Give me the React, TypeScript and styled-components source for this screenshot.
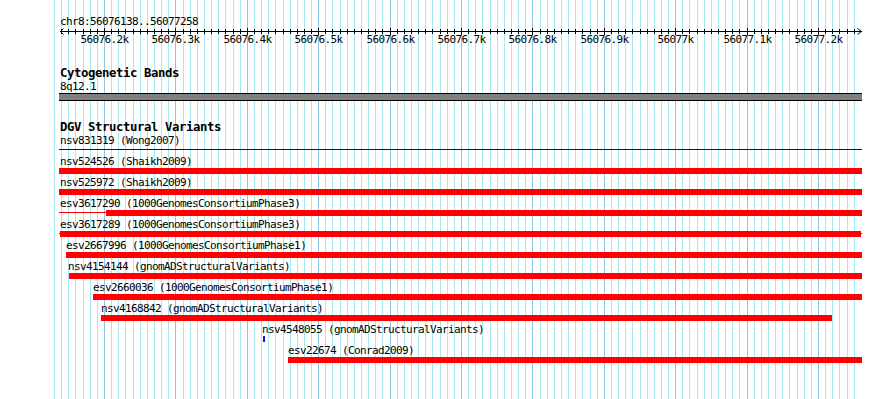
import React from 'react';
import styled, { createGlobalStyle } from 'styled-components';

const GlobalStyle = createGlobalStyle`
  html, body {
    margin: 0;
    padding: 0;
    background: #fff;
  }
`;

// 0.714 px per bp, 56076.2k sits on pixel column 104
const toX = (bp: number) => Math.round(104 + (bp - 56076200) * 0.714);

const GRID_FIRST = 56076130;
const GRID_LAST = 56077250;
const RULER_LEFT = 60;
const RULER_RIGHT = 861;

const gridStops: number[] = [];
for (let bp = GRID_FIRST; bp <= GRID_LAST; bp += 10) gridStops.push(bp);

const isMajor = (bp: number) => bp % 100 === 0;

const tickLabel = (bp: number) => {
  const k = bp / 1000;
  return `${Number.isInteger(k) ? k : k.toFixed(1)}k`;
};

const RED = '#ff0000';
const NAVY = '#0000c0';
const BLUE = '#0a14e6';

type Segment = { kind: 'bar' | 'line'; from: number; to: number; color: string };
type Variant = { id: string; study: string; x: number; segs: Segment[] };

// pixel spans, features running off the view are clipped at 59 / 862
const variants: Variant[] = [
  { id: 'nsv831319', study: 'Wong2007', x: 60, segs: [{ kind: 'line', from: 59, to: 862, color: NAVY }] },
  { id: 'nsv524526', study: 'Shaikh2009', x: 60, segs: [{ kind: 'bar', from: 59, to: 862, color: RED }] },
  { id: 'nsv525972', study: 'Shaikh2009', x: 60, segs: [{ kind: 'bar', from: 59, to: 862, color: RED }] },
  {
    id: 'esv3617290',
    study: '1000GenomesConsortiumPhase3',
    x: 60,
    segs: [
      { kind: 'line', from: 59, to: 106, color: RED },
      { kind: 'bar', from: 106, to: 862, color: RED },
    ],
  },
  {
    id: 'esv3617289',
    study: '1000GenomesConsortiumPhase3',
    x: 60,
    segs: [
      { kind: 'line', from: 59, to: 862, color: RED },
      { kind: 'bar', from: 60, to: 861, color: RED },
    ],
  },
  { id: 'esv2667996', study: '1000GenomesConsortiumPhase1', x: 66, segs: [{ kind: 'bar', from: 66, to: 862, color: RED }] },
  { id: 'nsv4154144', study: 'gnomADStructuralVariants', x: 68, segs: [{ kind: 'bar', from: 69, to: 862, color: RED }] },
  { id: 'esv2660036', study: '1000GenomesConsortiumPhase1', x: 93, segs: [{ kind: 'bar', from: 93, to: 862, color: RED }] },
  { id: 'nsv4168842', study: 'gnomADStructuralVariants', x: 101, segs: [{ kind: 'bar', from: 101, to: 832, color: RED }] },
  { id: 'nsv4548055', study: 'gnomADStructuralVariants', x: 262, segs: [{ kind: 'bar', from: 263, to: 265, color: BLUE }] },
  { id: 'esv22674', study: 'Conrad2009', x: 288, segs: [{ kind: 'bar', from: 288, to: 862, color: RED }] },
];

const MONO = `'DejaVu Sans Mono', 'Liberation Mono', monospace`;

const Panel = styled.div`
  position: relative;
  width: 890px;
  height: 399px;
  overflow: hidden;
  box-sizing: border-box;
  padding-top: 15px;
  background: #fff;
  color: #000;
  font-family: ${MONO};
`;

const GridLayer = styled.svg`
  position: absolute;
  top: 0;
  left: 0;
  width: 890px;
  height: 399px;
  shape-rendering: crispEdges;
`;

const Content = styled.div`
  position: relative;
`;

// 6px per character, like the gd small font
const Label = styled.div<{ $x?: number }>`
  height: 13px;
  padding-left: ${p => p.$x ?? 60}px;
  font-size: 11px;
  letter-spacing: -0.62px;
  line-height: 13px;
  white-space: nowrap;
`;

const Axis = styled.svg`
  display: block;
  width: 890px;
  height: 19px;
  shape-rendering: crispEdges;

  text {
    font-family: ${MONO};
    font-size: 11px;
    letter-spacing: -0.62px;
    fill: #000;
  }
`;

const Track = styled.section`
  margin-top: 20px;
`;

const TrackTitle = styled.div`
  height: 13px;
  padding-left: 60px;
  font-size: 12.3px;
  font-weight: bold;
  letter-spacing: -0.4px;
  line-height: 13px;
  white-space: nowrap;
`;

const Band = styled.div`
  width: 803px;
  height: 6px;
  margin-left: 59px;
  background: #808080;
  border-top: 1px solid #000;
  border-bottom: 1px solid #000;
`;

const FeatureRow = styled.div`
  height: 21px;
`;

const Lane = styled.div`
  position: relative;
  height: 6px;
`;

const Seg = styled.div<{ $kind: 'bar' | 'line'; $color: string }>`
  position: absolute;
  top: ${p => (p.$kind === 'bar' ? 0 : 2)}px;
  height: ${p => (p.$kind === 'bar' ? 6 : 1)}px;
  background: ${p => p.$color};
`;

const Grid = () => (
  <GridLayer viewBox="0 0 890 399">
    {gridStops.map(bp => {
      const x = toX(bp) + 0.5;
      return (
        <line
          key={bp}
          x1={x}
          x2={x}
          y1={0}
          y2={399}
          stroke={isMajor(bp) ? '#8cc6e8' : '#a8e8f0'}
          strokeWidth={1}
        />
      );
    })}
  </GridLayer>
);

const Ruler = () => {
  const ticks = gridStops.filter(bp => toX(bp) > RULER_LEFT && toX(bp) < RULER_RIGHT);
  return (
    <>
      <Label>chr8:56076138..56077258</Label>
      <Axis viewBox="0 0 890 19">
        <line x1={RULER_LEFT} x2={RULER_RIGHT + 1} y1={3.5} y2={3.5} stroke="#000" />
        <polyline
          points={`${RULER_LEFT + 3.5},0.5 ${RULER_LEFT + 0.5},3.5 ${RULER_LEFT + 3.5},6.5`}
          fill="none"
          stroke="#000"
          shapeRendering="auto"
        />
        <polyline
          points={`${RULER_RIGHT - 3.5},0.5 ${RULER_RIGHT + 0.5},3.5 ${RULER_RIGHT - 3.5},6.5`}
          fill="none"
          stroke="#000"
          shapeRendering="auto"
        />
        {ticks.map(bp => {
          const x = toX(bp) + 0.5;
          const major = isMajor(bp);
          return (
            <g key={bp}>
              <line x1={x} x2={x} y1={major ? 0 : 1} y2={major ? 7 : 6} stroke="#000" />
              {major && (
                <text x={x} y={15} textAnchor="middle">
                  {tickLabel(bp)}
                </text>
              )}
            </g>
          );
        })}
      </Axis>
    </>
  );
};

const VariantRow: React.FC<{ v: Variant }> = ({ v }) => (
  <FeatureRow>
    <Label $x={v.x}>
      {v.id} ({v.study})
    </Label>
    <Lane>
      {v.segs.map((s, i) => (
        <Seg key={i} $kind={s.kind} $color={s.color} style={{ left: s.from, width: s.to - s.from }} />
      ))}
    </Lane>
  </FeatureRow>
);

export default function App() {
  return (
    <>
      <GlobalStyle />
      <Panel>
        <Grid />
        <Content>
          <Ruler />
          <Track>
            <TrackTitle>Cytogenetic Bands</TrackTitle>
            <Label>8q12.1</Label>
            <Band />
          </Track>
          <Track>
            <TrackTitle>DGV Structural Variants</TrackTitle>
            {variants.map(v => (
              <VariantRow key={v.id} v={v} />
            ))}
          </Track>
        </Content>
      </Panel>
    </>
  );
}
